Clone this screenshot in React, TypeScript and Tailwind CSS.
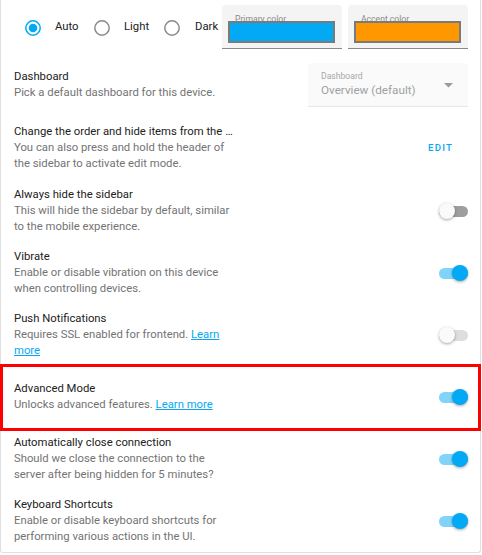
import React from "react";

type Row = {
    title: string;
    desc: React.ReactNode;
    h: string;
};

function Radio({ checked }: { checked?: boolean }) {
    return (
        <svg width="16" height="16" viewBox="0 0 16 16" className="shrink-0">
            <circle
                cx="8"
                cy="8"
                r="7.2"
                fill="none"
                stroke={checked ? "#03a9f4" : "#8a8a8a"}
                strokeWidth="1.5"
            />
            {checked && <circle cx="8" cy="8" r="4.3" fill="#03a9f4" />}
        </svg>
    );
}

function Toggle({ on, disabled }: { on?: boolean; disabled?: boolean }) {
    const track = disabled ? "bg-[#dedede]" : on ? "bg-[#80d4fa]" : "bg-[#9e9e9e]";
    const thumb = on ? "bg-[#03a9f4] left-[13px]" : "bg-[#fafafa] left-0";
    return (
        <div className="relative w-[29px] h-4 shrink-0 flex items-center">
            <div className={`w-[29px] h-[11px] rounded-full ${track}`} />
            <div
                className={`absolute top-0 w-4 h-4 rounded-full shadow-[0_1px_3px_rgba(0,0,0,0.35)] ${thumb}`}
            />
        </div>
    );
}

function Learn() {
    return <span className="text-[#03a9f4] underline">Learn more</span>;
}

function Info({ title, desc, truncate }: { title: string; desc: React.ReactNode; truncate?: boolean }) {
    return (
        <div className="w-[221px] shrink-0 leading-4">
            <div className={`text-[#212121] ${truncate ? "truncate" : ""}`}>{title}</div>
            <div className="text-[#737373]">{desc}</div>
        </div>
    );
}

export default function App() {
    const toggleRows: (Row & { on?: boolean; disabled?: boolean; highlight?: boolean })[] = [
        {
            title: "Always hide the sidebar",
            desc: "This will hide the sidebar by default, similar to the mobile experience.",
            h: "h-[62px]",
        },
        {
            title: "Vibrate",
            desc: "Enable or disable vibration on this device when controlling devices.",
            h: "h-[62px]",
            on: true,
        },
        {
            title: "Push Notifications",
            desc: (
                <>
                    Requires SSL enabled for frontend. <Learn />
                </>
            ),
            h: "h-[62px]",
            disabled: true,
        },
        {
            title: "Advanced Mode",
            desc: (
                <>
                    Unlocks advanced features. <Learn />
                </>
            ),
            h: "h-[62px]",
            on: true,
            highlight: true,
        },
        {
            title: "Automatically close connection",
            desc: "Should we close the connection to the server after being hidden for 5 minutes?",
            h: "h-[62px]",
            on: true,
        },
        {
            title: "Keyboard Shortcuts",
            desc: "Enable or disable keyboard shortcuts for performing various actions in the UI.",
            h: "h-[62px]",
            on: true,
        },
    ];

    return (
        <div className="w-[482px] h-[555px] bg-white font-['Roboto',sans-serif] text-[11.3px]">
            <div className="w-[481px] bg-white border-x border-b border-[#e0e0e0] rounded-b-[3px]">
                {/* Theme */}
                <div className="h-[54px] flex items-center pr-[12px]">
                    <div className="flex items-center pl-[24px] pt-px">
                        <Radio checked />
                        <span className="ml-[14px] w-[39px] text-[#212121]">Auto</span>
                        <Radio />
                        <span className="ml-[14px] w-[40px] text-[#212121]">Light</span>
                        <Radio />
                        <span className="ml-[15px] text-[#212121]">Dark</span>
                    </div>
                    <div className="ml-auto flex gap-[6px]">
                        {[
                            { label: "Primary color", color: "bg-[#03a9f4]" },
                            { label: "Accent color", color: "bg-[#ff9800]" },
                        ].map((f) => (
                            <div
                                key={f.label}
                                className="w-[120px] h-[44px] bg-[#f4f4f4] rounded-t-[4px] border-b border-[#8a8a8a] px-[6px] pt-[10px]"
                            >
                                <div className="text-[8.6px] leading-[8px] h-[6px] text-[#8a8a8a] pl-[7px]">{f.label}</div>
                                <div className={`relative h-[22px] w-[107px] border-2 border-[#7a7a7a] ${f.color}`} />
                            </div>
                        ))}
                    </div>
                </div>

                {/* Dashboard */}
                <div className="h-[62px] flex items-center pl-[13px] pr-[12px]">
                    <Info title="Dashboard" desc="Pick a default dashboard for this device." />
                    <div className="ml-auto w-[160px] h-[44px] bg-[#fafafa] rounded-t-[4px] border-b border-[#e6e6e6] pl-[13px] pr-[15px] pt-[8px] relative">
                        <div className="text-[8.6px] leading-[10px] text-[#a8a8a8]">Dashboard</div>
                        <div className="text-[11.7px] leading-[18px] text-[#a0a0a0]">Overview (default)</div>
                        <svg width="9" height="5" viewBox="0 0 9 5" className="absolute right-[15px] top-[20px]">
                            <path d="M0 0 L9 0 L4.5 4.5 Z" fill="#9a9a9a" />
                        </svg>
                    </div>
                </div>

                {/* Change order */}
                <div className="h-[64px] flex items-center pl-[13px] pr-[12px]">
                    <Info
                        title="Change the order and hide items from the sidebar"
                        truncate
                        desc="You can also press and hold the header of the sidebar to activate edit mode."
                    />
                    <button className="ml-auto mr-[15px] text-[9.6px] font-medium tracking-[1.2px] text-[#03a9f4]">
                        EDIT
                    </button>
                </div>

                {toggleRows.map((r) => (
                    <div key={r.title} className={`${r.h} relative flex items-center pl-[13px] pr-[12px]`}>
                        <Info title={r.title} desc={r.desc} />
                        <div className="ml-auto">
                            <Toggle on={r.on} disabled={r.disabled} />
                        </div>
                        {r.highlight && (
                            <div className="absolute -left-px -right-px -top-[2px] -bottom-[3px] border-[3px] border-[#ff0000] pointer-events-none" />
                        )}
                    </div>
                ))}
            </div>
        </div>
    );
}
